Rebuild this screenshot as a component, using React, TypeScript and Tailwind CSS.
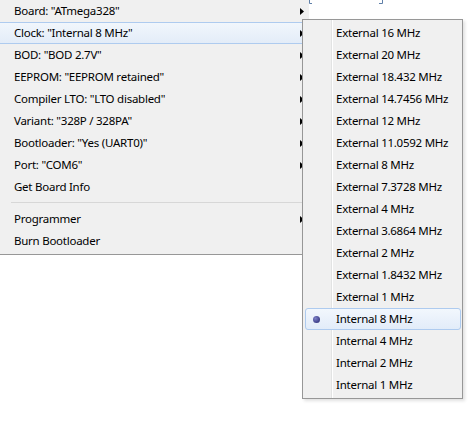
import React from 'react';

type Item = { label: string; sub?: boolean; active?: boolean } | 'sep';

const boardMenu: Item[] = [
  { label: 'Board: "ATmega328"', sub: true },
  { label: 'Clock: "Internal 8 MHz"', sub: true, active: true },
  { label: 'BOD: "BOD 2.7V"', sub: true },
  { label: 'EEPROM: "EEPROM retained"', sub: true },
  { label: 'Compiler LTO: "LTO disabled"', sub: true },
  { label: 'Variant: "328P / 328PA"', sub: true },
  { label: 'Bootloader: "Yes (UART0)"', sub: true },
  { label: 'Port: "COM6"', sub: true },
  { label: 'Get Board Info' },
  'sep',
  { label: 'Programmer', sub: true },
  { label: 'Burn Bootloader' },
];

const clocks = [
  'External 16 MHz',
  'External 20 MHz',
  'External 18.432 MHz',
  'External 14.7456 MHz',
  'External 12 MHz',
  'External 11.0592 MHz',
  'External 8 MHz',
  'External 7.3728 MHz',
  'External 4 MHz',
  'External 3.6864 MHz',
  'External 2 MHz',
  'External 1.8432 MHz',
  'External 1 MHz',
  'Internal 8 MHz',
  'Internal 4 MHz',
  'Internal 2 MHz',
  'Internal 1 MHz',
];

const selectedClock = 'Internal 8 MHz';

function Arrow() {
  return (
    <svg width="4" height="7" viewBox="0 0 4 7" className="shrink-0">
      <path d="M0 0 L4 3.5 L0 7 Z" fill="#000" />
    </svg>
  );
}

export default function App() {
  return (
    <div className="relative w-[473px] h-[429px] bg-white overflow-hidden font-['Noto_Sans','Liberation_Sans',sans-serif] text-[11.5px] tracking-[-0.25px] text-black">
      {/* bits of the editor text peeking out behind the menus */}
      <svg width="80" height="6" className="absolute left-[308px] top-0">
        <path d="M1.5 0 V3.5 H4" stroke="#5f7fa8" strokeWidth="1" fill="none" />
        <path d="M74.5 0 V3.5 H71" stroke="#5f7fa8" strokeWidth="1" fill="none" />
      </svg>

      {/* Tools menu */}
      <div className="w-[309px] bg-[#f0f0f0] border-b border-[#979797] pb-[2px]">
        {boardMenu.map((item, i) =>
          item === 'sep' ? (
            <div key={i} className="h-[10px] flex items-center pl-[11px]">
              <div className="w-full h-[2px] border-t border-[#d7d7d7] border-b-white" />
            </div>
          ) : (
            <div
              key={i}
              className={`h-[22px] flex items-center justify-between pl-[14px] pr-[5px] ${
                item.active
                  ? 'bg-gradient-to-b from-[#f1f6fc] to-[#e3ecf8] border-y border-[#aecbef]'
                  : ''
              }`}
            >
              <span className="leading-none">{item.label}</span>
              {item.sub && <Arrow />}
            </div>
          )
        )}
      </div>

      {/* Clock submenu, with the icon gutter drawn into its background */}
      <div className="absolute left-[302px] top-[19px] w-[161px] flex flex-col border border-[#979797] py-[2px] pl-[2px] pr-[1px] shadow-[2px_2px_3px_rgba(0,0,0,0.12)] bg-[linear-gradient(to_right,#f0f0f0_28px,#e2e3e3_28px,#e2e3e3_29px,#ffffff_29px,#ffffff_30px,#f0f0f0_30px)]">
        {clocks.map((c) => {
          const on = c === selectedClock;
          return (
            <div
              key={c}
              className={`h-[22px] flex items-center rounded-[3px] ${
                on
                  ? 'bg-gradient-to-b from-[#f2f7fd] to-[#e2ecf9] border border-[#aecbef] pl-[7px] gap-[16px]'
                  : 'pl-[31px]'
              }`}
            >
              {on && (
                <span className="w-[7px] h-[7px] rounded-full bg-[radial-gradient(circle_at_35%_35%,#7d80c8,#23256e)]" />
              )}
              <span className="leading-none">{c}</span>
            </div>
          );
        })}
      </div>
    </div>
  );
}
